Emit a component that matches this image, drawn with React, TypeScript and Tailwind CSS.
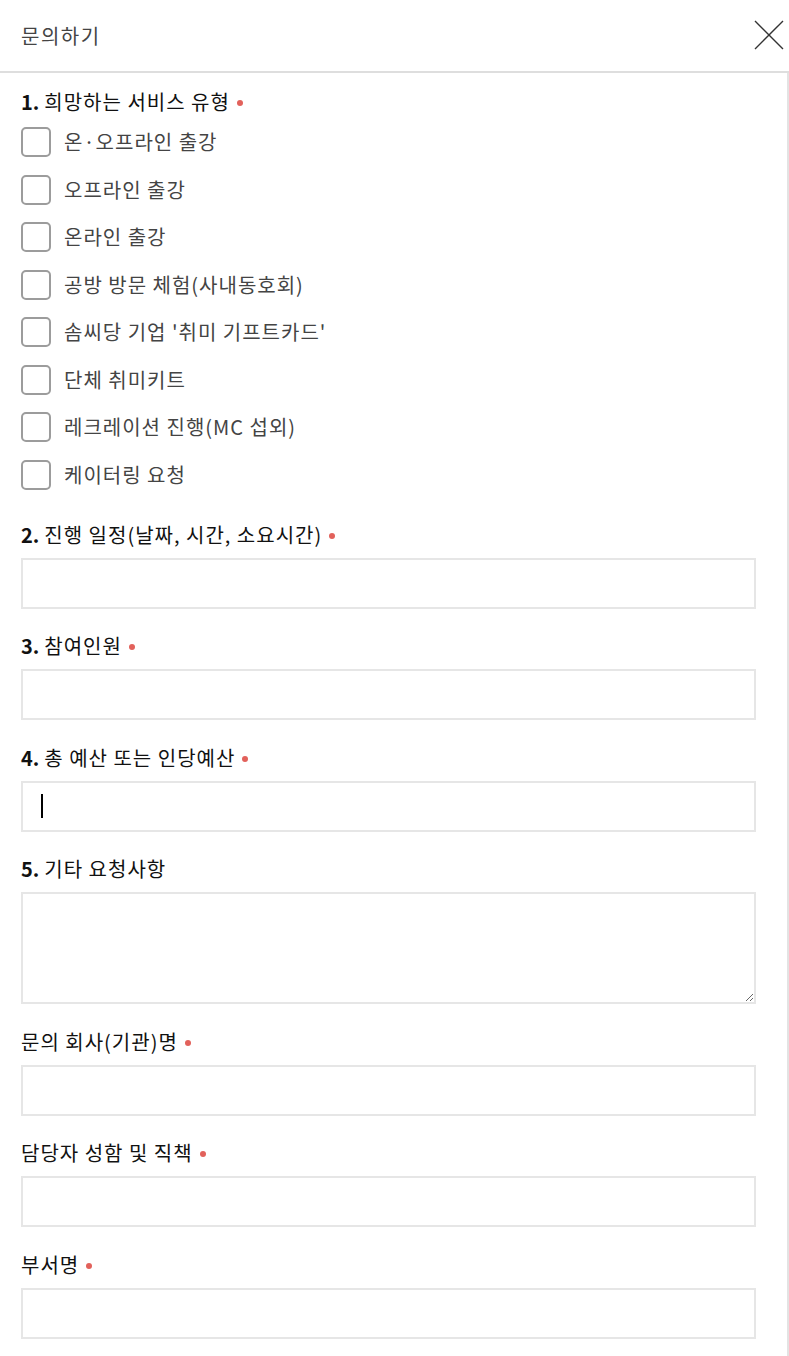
import React from 'react';

const services = [
  '온·오프라인 출강',
  '오프라인 출강',
  '온라인 출강',
  '공방 방문 체험(사내동호회)',
  "솜씨당 기업 '취미 기프트카드'",
  '단체 취미키트',
  '레크레이션 진행(MC 섭외)',
  '케이터링 요청',
];

const font = { fontFamily: '"Noto Sans CJK KR", "Noto Sans", sans-serif' };

function Dot() {
  return <span className="ml-[7px] inline-block h-[6px] w-[6px] translate-y-[1px] rounded-full bg-[#e2615b]" />;
}

function Label({ num, text, required }: { num?: string; text: string; required?: boolean }) {
  return (
    <div className="flex h-[24px] items-center text-[20px] leading-[24px] tracking-[1px] text-[#111]">
      {num && <span className="mr-[5px] font-bold tracking-normal">{num}</span>}
      <span>{text}</span>
      {required && <Dot />}
    </div>
  );
}

function Field({
  num,
  label,
  required,
  caret,
}: {
  num?: string;
  label: string;
  required?: boolean;
  caret?: boolean;
}) {
  return (
    <div className="mt-[25.5px] first:mt-0">
      <Label num={num} text={label} required={required} />
      {caret ? (
        <div className="mt-[11px] flex h-[51px] w-[735px] items-center border-2 border-[#e6e6e6] pl-[18px]">
          <span className="h-[24px] w-[2px] bg-black" />
        </div>
      ) : (
        <input className="mt-[11px] block h-[51px] w-[735px] border-2 border-[#e6e6e6] outline-none" />
      )}
    </div>
  );
}

export default function App() {
  return (
    <div className="h-[1356px] w-[789px] overflow-hidden bg-white" style={font}>
      <div className="flex h-[73px] items-center justify-between border-b-2 border-[#dedede] pl-[21px] pr-[5px]">
        <h1 className="text-[20px] font-normal tracking-[1.5px] text-[#444]">문의하기</h1>
        <svg width="30" height="30" viewBox="0 0 30 30" className="mt-[-1px]">
          <path d="M1 1 L29 29 M29 1 L1 29" stroke="#333" strokeWidth="1.4" fill="none" />
        </svg>
      </div>

      <div className="h-full border-r-2 border-[#e3e3e3] pl-[21px] pt-[17px]">
        <Label num="1." text="희망하는 서비스 유형" required />
        <div className="mt-[13px] flex flex-col gap-[17.5px]">
          {services.map((s) => (
            <label key={s} className="flex h-[30px] items-center">
              <span className="h-[30px] w-[30px] shrink-0 rounded-[5px] border-2 border-[#9c9c9c]" />
              <span className="ml-[13px] text-[20px] leading-[30px] tracking-[1px] text-[#444]">{s}</span>
            </label>
          ))}
        </div>

        <div className="mt-[33px]">
          <Field num="2." label="진행 일정(날짜, 시간, 소요시간)" required />
          <Field num="3." label="참여인원" required />
          <Field num="4." label="총 예산 또는 인당예산" required caret />
          <div className="mt-[25.5px]">
            <Label num="5." text="기타 요청사항" />
            <textarea className="mt-[11px] block h-[112px] w-[735px] border-2 border-[#e6e6e6] outline-none" />
          </div>
          <Field label="문의 회사(기관)명" required />
          <Field label="담당자 성함 및 직책" required />
          <Field label="부서명" required />
        </div>
      </div>
    </div>
  );
}
